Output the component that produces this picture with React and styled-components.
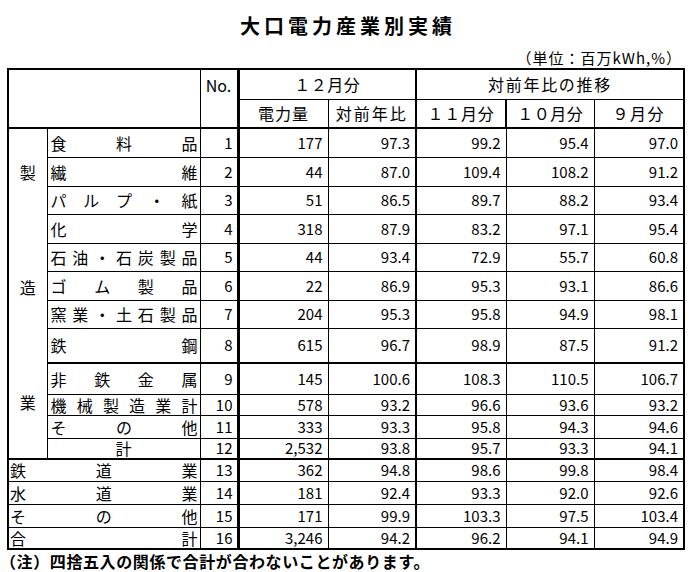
import React from 'react';
import styled, { createGlobalStyle, css } from 'styled-components';

const GlobalStyle = createGlobalStyle`
  html, body { margin: 0; padding: 0; background: #fff; }
  body {
    font-family: "Noto Sans CJK JP", "Noto Sans", sans-serif;
    color: #000;
  }
`;

const Page = styled.div`
  width: 692px;
  height: 572px;
  overflow: hidden;
  display: flex;
  flex-direction: column;
  align-items: flex-start;
`;

const Title = styled.h1`
  align-self: stretch;
  margin: 0;
  padding: 14px 0 0 4px;
  font-size: 20px;
  line-height: 24px;
  font-weight: 700;
  letter-spacing: 4px;
  text-align: center;
`;

const Unit = styled.div`
  align-self: stretch;
  margin-top: 11px;
  padding-right: 10px;
  font-size: 15px;
  line-height: 18px;
  letter-spacing: 1px;
  text-align: right;
`;

const Sheet = styled.table`
  margin: 1px 0 0 7px;
  border-collapse: collapse;
  table-layout: fixed;
  width: 677px;
  border: 2px solid #000;
`;

const cellBase = css`
  box-sizing: border-box;
  height: ${p => p.$h}px;
  padding: 0;
  border: 1px solid #000;
  border-right-width: ${p => p.$br || 1}px;
  border-bottom-width: ${p => p.$bb || 1}px;
  line-height: 16px;
  white-space: nowrap;
  vertical-align: middle;
  font-weight: 400;
`;

const HeadCell = styled.th`
  ${cellBase};
  font-size: 16px;
  text-align: center;
  letter-spacing: ${p => p.$ls || 0}px;
  vertical-align: ${p => (p.$top ? 'top' : 'middle')};
  padding-top: ${p => (p.$top ? 7 : 0)}px;
`;

const CategoryCell = styled.th`
  ${cellBase};
  vertical-align: top;
`;

const CategoryText = styled.div`
  display: flex;
  flex-direction: column;
  align-items: center;
  gap: 99px;
  padding-top: 35px;
  font-size: 16px;
  line-height: 16px;
`;

const LabelCell = styled.th`
  ${cellBase};
  font-size: 16px;
`;

const Spread = styled.div`
  display: flex;
  justify-content: ${p => (p.$center ? 'center' : 'space-between')};
  padding: ${p => (p.$center ? '0' : `0 2px 0 ${p.$wide ? 1 : 3}px`)};
`;

const NoCell = styled.td`
  ${cellBase};
  font-size: 15px;
  text-align: right;
  padding-right: 4px;
`;

const NumCell = styled.td`
  ${cellBase};
  font-size: 15px;
  text-align: right;
  padding-right: 5px;
`;

const Note = styled.p`
  margin: 1px 0 0 0;
  font-size: 16px;
  line-height: 20px;
  font-weight: 700;
  letter-spacing: 0.6px;
`;

const COLS = [39, 153, 38, 90, 88, 90, 88, 90];

const ROWS = [
  { label: '食料品', no: 1, h: 29, v: ['177', '97.3', '99.2', '95.4', '97.0'] },
  { label: '繊維', no: 2, h: 29, v: ['44', '87.0', '109.4', '108.2', '91.2'] },
  { label: 'パルプ・紙', no: 3, h: 28, v: ['51', '86.5', '89.7', '88.2', '93.4'] },
  { label: '化学', no: 4, h: 29, v: ['318', '87.9', '83.2', '97.1', '95.4'] },
  { label: '石油・石炭製品', no: 5, h: 28, v: ['44', '93.4', '72.9', '55.7', '60.8'] },
  { label: 'ゴム製品', no: 6, h: 29, v: ['22', '86.9', '95.3', '93.1', '86.6'] },
  { label: '窯業・土石製品', no: 7, h: 28, v: ['204', '95.3', '95.8', '94.9', '98.1'] },
  { label: '鉄鋼', no: 8, h: 35, bb: 2, v: ['615', '96.7', '98.9', '87.5', '91.2'] },
  { label: '非鉄金属', no: 9, h: 31, v: ['145', '100.6', '108.3', '110.5', '106.7'] },
  { label: '機械製造業計', no: 10, h: 21, v: ['578', '93.2', '96.6', '93.6', '93.2'] },
  { label: 'その他', no: 11, h: 23, v: ['333', '93.3', '95.8', '94.3', '94.6'] },
  { label: '計', no: 12, h: 21, bb: 2, center: true, v: ['2,532', '93.8', '95.7', '93.3', '94.1'] },
  { label: '鉄道業', no: 13, h: 22, wide: true, v: ['362', '94.8', '98.6', '99.8', '98.4'] },
  { label: '水道業', no: 14, h: 23, wide: true, v: ['181', '92.4', '93.3', '92.0', '92.6'] },
  { label: 'その他', no: 15, h: 23, wide: true, v: ['171', '99.9', '103.3', '97.5', '103.4'] },
  { label: '合計', no: 16, h: 22, wide: true, v: ['3,246', '94.2', '96.2', '94.1', '94.9'] },
];

function Label({ row }) {
  return (
    <LabelCell colSpan={row.wide ? 2 : 1} $h={row.h} $bb={row.bb}>
      <Spread $center={row.center} $wide={row.wide}>
        {Array.from(row.label).map((ch, i) => (
          <span key={i}>{ch}</span>
        ))}
      </Spread>
    </LabelCell>
  );
}

export default function App() {
  return (
    <>
      <GlobalStyle />
      <Page>
        <Title>大口電力産業別実績</Title>
        <Unit>（単位：百万kWh,%）</Unit>
        <Sheet>
          <colgroup>
            {COLS.map((w, i) => (
              <col key={i} style={{ width: w }} />
            ))}
          </colgroup>
          <thead>
            <tr>
              <HeadCell colSpan={2} rowSpan={2} $h={30} $bb={2} />
              <HeadCell rowSpan={2} $h={30} $bb={2} $br={3} $top>No.</HeadCell>
              <HeadCell colSpan={2} $h={30} $br={2} $ls={0.5}>１２月分</HeadCell>
              <HeadCell colSpan={3} $h={30} $ls={1.7}>対前年比の推移</HeadCell>
            </tr>
            <tr>
              <HeadCell $h={29} $bb={2} $ls={1}>電力量</HeadCell>
              <HeadCell $h={29} $bb={2} $br={2} $ls={2}>対前年比</HeadCell>
              <HeadCell $h={29} $bb={2} $br={2} $ls={0.8}>１１月分</HeadCell>
              <HeadCell $h={29} $bb={2} $ls={0.5}>１０月分</HeadCell>
              <HeadCell $h={29} $bb={2} $ls={1.5}>９月分</HeadCell>
            </tr>
          </thead>
          <tbody>
            {ROWS.map((row, idx) => (
              <tr key={row.no}>
                {idx === 0 && (
                  <CategoryCell rowSpan={12} $bb={2}>
                    <CategoryText>
                      <span>製</span>
                      <span>造</span>
                      <span>業</span>
                    </CategoryText>
                  </CategoryCell>
                )}
                <Label row={row} />
                <NoCell $h={row.h} $bb={row.bb} $br={3}>{row.no}</NoCell>
                {row.v.map((val, i) => (
                  <NumCell key={i} $h={row.h} $bb={row.bb} $br={i === 1 ? 2 : 1}>
                    {val}
                  </NumCell>
                ))}
              </tr>
            ))}
          </tbody>
        </Sheet>
        <Note>（注）四捨五入の関係で合計が合わないことがあります。</Note>
      </Page>
    </>
  );
}
